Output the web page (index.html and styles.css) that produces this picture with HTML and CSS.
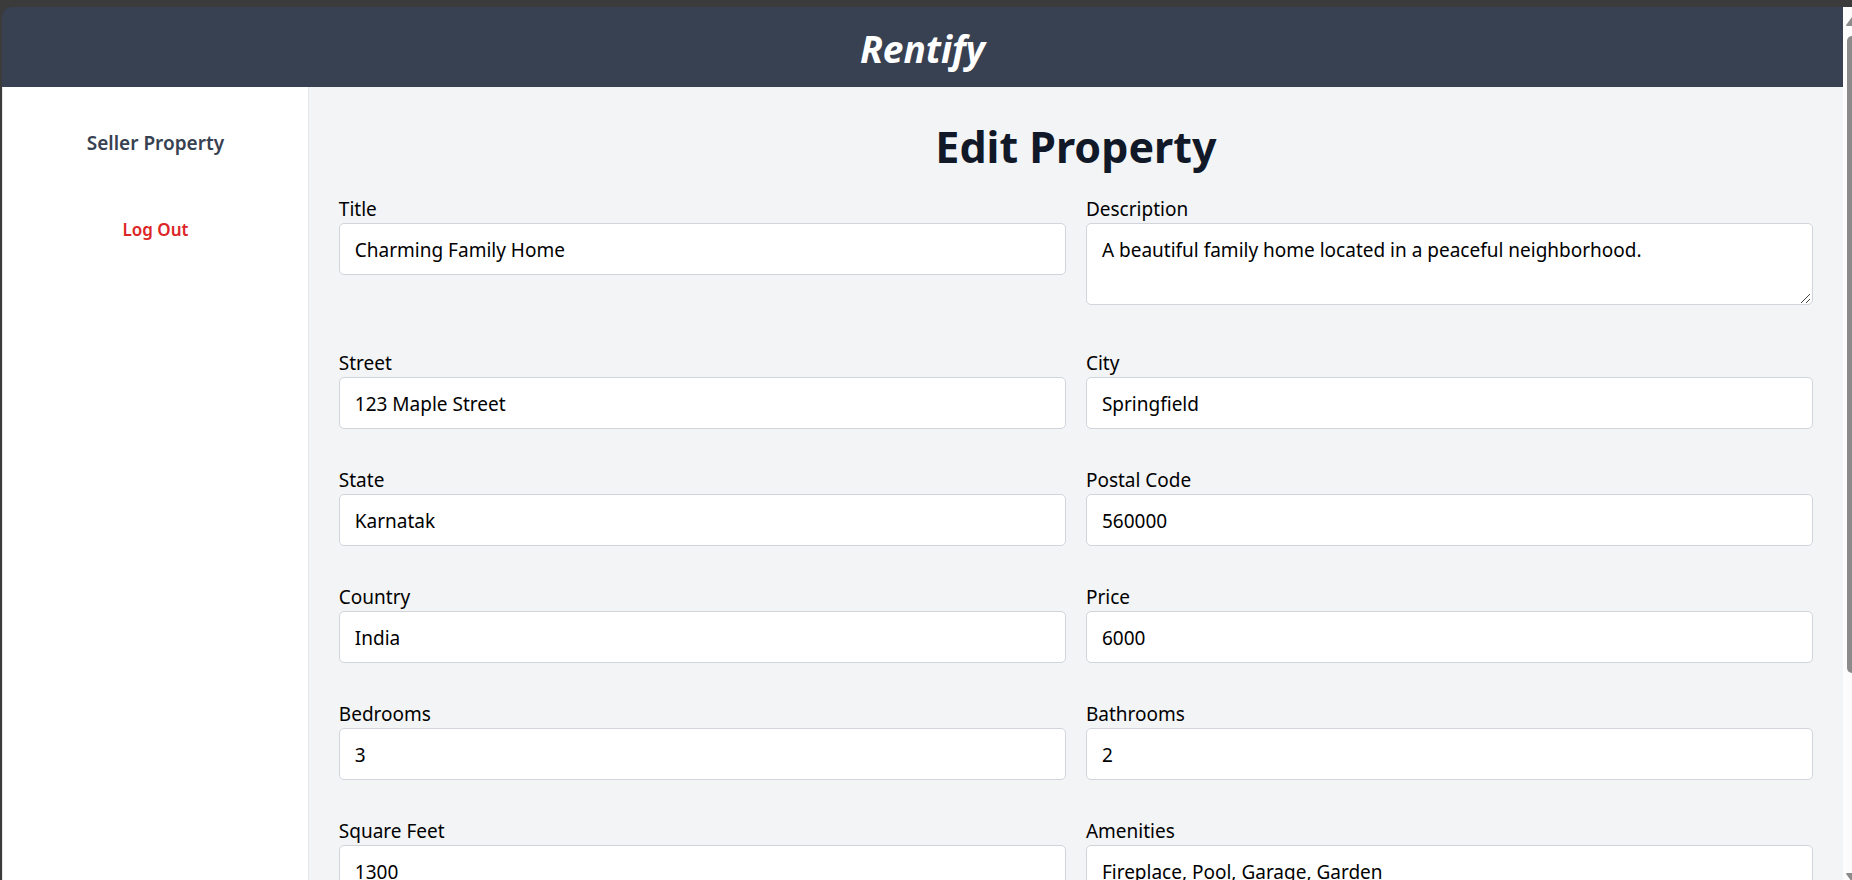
FILE: index.html
```html
<!DOCTYPE html>
<html lang="en">
<head>
<meta charset="utf-8">
<title>Rentify</title>
<link rel="stylesheet" href="styles.css">
</head>
<body>
<div class="window">
  <div class="page">
    <header class="topbar"><h1 class="brand">Rentify</h1></header>
    <div class="body">
      <nav class="sidebar">
        <a class="nav-link" href="#">Seller Property</a>
        <button class="logout" type="button">Log Out</button>
      </nav>
      <main class="content">
        <h2 class="title">Edit Property</h2>
        <form class="form">
          <div class="field"><label for="title">Title</label><input id="title" type="text" value="Charming Family Home"></div>
          <div class="field field-area"><label for="description">Description</label><textarea id="description" rows="2">A beautiful family home located in a peaceful neighborhood.</textarea></div>
          <div class="field"><label for="street">Street</label><input id="street" type="text" value="123 Maple Street"></div>
          <div class="field"><label for="city">City</label><input id="city" type="text" value="Springfield"></div>
          <div class="field"><label for="state">State</label><input id="state" type="text" value="Karnatak"></div>
          <div class="field"><label for="postal">Postal Code</label><input id="postal" type="text" value="560000"></div>
          <div class="field"><label for="country">Country</label><input id="country" type="text" value="India"></div>
          <div class="field"><label for="price">Price</label><input id="price" type="text" value="6000"></div>
          <div class="field"><label for="bedrooms">Bedrooms</label><input id="bedrooms" type="text" value="3"></div>
          <div class="field"><label for="bathrooms">Bathrooms</label><input id="bathrooms" type="text" value="2"></div>
          <div class="field"><label for="sqft">Square Feet</label><input id="sqft" type="text" value="1300"></div>
          <div class="field"><label for="amenities">Amenities</label><input id="amenities" type="text" value="Fireplace, Pool, Garage, Garden"></div>
        </form>
      </main>
    </div>
  </div>
  <div class="scrollbar" aria-hidden="true">
    <svg class="arrow" viewBox="0 0 18 29"><path d="M4 19 Q2.500 19 3.500 17.500 L9 10 L14.500 17.500 Q15.500 19 14 19 Z"/></svg>
    <div class="track"><div class="thumb"></div></div>
    <svg class="arrow arrow-down" viewBox="0 0 18 17"><path d="M4 10 Q2.500 10 3.500 11.500 L9 19 L14.500 11.500 Q15.500 10 14 10 Z"/></svg>
  </div>
</div>
</body>
</html>
```
FILE: styles.css
```css
* { box-sizing: border-box; }

body {
  margin: 0;
  height: 100vh;
  padding: 7px 0 0 2px;
  overflow: hidden;
  background: #3b3b3b;
  color: #000;
  font-family: "Noto Sans", "Open Sans", sans-serif;
  font-size: 19px;
  line-height: 30px;
}

.window {
  display: flex;
  height: 100%;
}

.page {
  flex: 1;
  min-width: 0;
  display: flex;
  flex-direction: column;
}

.topbar {
  flex: none;
  padding: 19px 0 16px;
  border-top-left-radius: 10px;
  background: #384152;
  text-align: center;
}

.brand {
  margin: 0;
  color: #fff;
  font-size: 37px;
  font-style: italic;
  font-weight: 700;
  line-height: 45px;
}

.body {
  flex: 1;
  min-height: 0;
  display: grid;
  grid-template-columns: 1fr 5fr;
}

.sidebar {
  display: flex;
  flex-direction: column;
  align-items: center;
  gap: 57px;
  padding: 41px 0;
  border: solid #e5e7eb;
  border-width: 0 1px;
  background: #fff;
  font-weight: 600;
}

.nav-link {
  color: #374151;
  font-size: 19px;
  text-decoration: none;
}

.logout {
  padding: 0;
  border: 0;
  background: none;
  color: #dc2626;
  font: inherit;
  font-size: 17px;
}

.content {
  min-width: 0;
  padding: 35px 30px;
  overflow: hidden;
  background: #f3f4f6;
}

.title {
  margin: 0 0 21px;
  color: #111827;
  font-size: 43px;
  font-weight: 700;
  line-height: 50px;
  text-align: center;
}

.form {
  display: grid;
  grid-template-columns: 1fr 1fr;
  gap: 20px;
}

.field {
  display: flex;
  flex-direction: column;
  padding-bottom: 15px;
}

.field-area { padding-bottom: 22px; }

label {
  padding-top: 2px;
  line-height: 28px;
}

input,
textarea {
  width: 100%;
  margin: 0;
  padding: 12px 15px 10px;
  border: 1px solid #d1d5db;
  border-radius: 5px;
  background: #fff;
  color: #000;
  font: inherit;
}

input { height: 52px; }

textarea {
  display: block;
  height: 82px;
  padding: 11px 15px 9px;
  resize: both;
}

textarea::-webkit-resizer {
  background: linear-gradient(135deg, transparent 45%, #444 45% 55%, transparent 55% 73%, #444 73% 83%, transparent 83%) 4px 5px / 9px 9px no-repeat;
}

.scrollbar {
  flex: 0 0 9px;
  display: flex;
  flex-direction: column;
  overflow: hidden;
  background: #fcfcfc;
}

.arrow {
  flex: none;
  width: 18px;
  height: 29px;
  fill: #8b8b8b;
}

.arrow-down { height: 17px; }

.track {
  flex: 1;
  padding-left: 4px;
}

.thumb {
  width: 10px;
  height: 77%;
  border-radius: 5px;
  background: #8b8b8b;
}
```
